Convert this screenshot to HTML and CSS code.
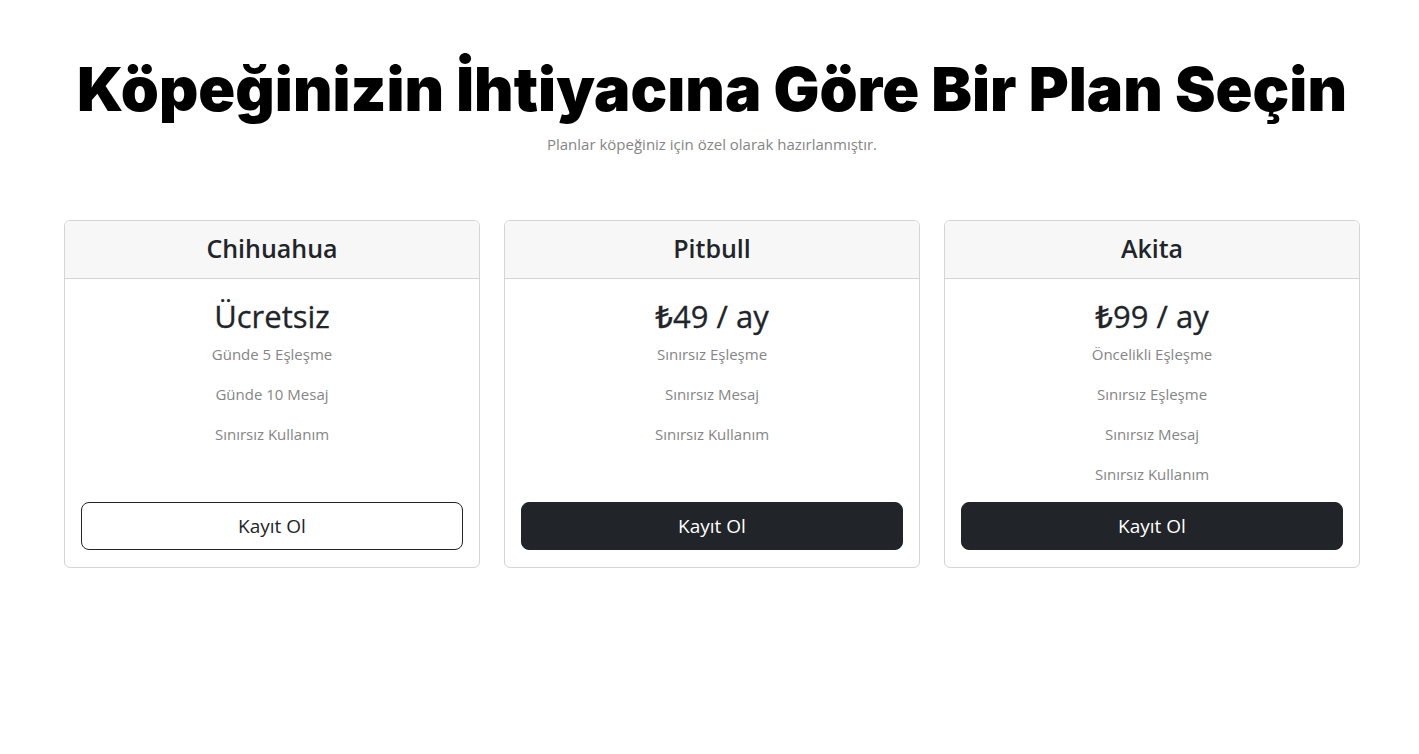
FILE: index.html
```html
<!DOCTYPE html>
<html lang="tr">
<head>
<meta charset="utf-8">
<title>Planlar</title>
<link rel="stylesheet" href="styles.css">
</head>
<body>
<main class="page">
  <header class="intro">
    <h1 class="title">Köpeğinizin İhtiyacına Göre Bir Plan Seçin</h1>
    <p class="lead">Planlar köpeğiniz için özel olarak hazırlanmıştır.</p>
  </header>
  <section class="plans">
    <article class="card">
      <div class="card-header"><h2 class="plan-name">Chihuahua</h2></div>
      <div class="card-body">
        <div class="price">Ücretsiz</div>
        <ul class="features">
          <li>Günde 5 Eşleşme</li>
          <li>Günde 10 Mesaj</li>
          <li>Sınırsız Kullanım</li>
        </ul>
        <button class="btn btn-outline" type="button">Kayıt Ol</button>
      </div>
    </article>
    <article class="card">
      <div class="card-header"><h2 class="plan-name">Pitbull</h2></div>
      <div class="card-body">
        <div class="price">₺49 / ay</div>
        <ul class="features">
          <li>Sınırsız Eşleşme</li>
          <li>Sınırsız Mesaj</li>
          <li>Sınırsız Kullanım</li>
        </ul>
        <button class="btn btn-dark" type="button">Kayıt Ol</button>
      </div>
    </article>
    <article class="card">
      <div class="card-header"><h2 class="plan-name">Akita</h2></div>
      <div class="card-body">
        <div class="price">₺99 / ay</div>
        <ul class="features">
          <li>Öncelikli Eşleşme</li>
          <li>Sınırsız Eşleşme</li>
          <li>Sınırsız Mesaj</li>
          <li>Sınırsız Kullanım</li>
        </ul>
        <button class="btn btn-dark" type="button">Kayıt Ol</button>
      </div>
    </article>
  </section>
</main>
</body>
</html>
```

FILE: styles.css
```css
* { box-sizing: border-box; }
html, body { margin: 0; padding: 0; background: #fff; }
body {
  font-family: "Open Sans", "Noto Sans", Arial, sans-serif;
  color: #212529;
}
.page {
  padding: 52px 0 0 5px;
}
.intro {
  text-align: center;
}
.title {
  margin: 0;
  font-family: Inter, "DejaVu Sans", sans-serif;
  font-weight: 900;
  font-size: 61px;
  line-height: 74px;
  color: #000;
}
.lead {
  margin: 7px 0 0;
  font-size: 15px;
  line-height: 22px;
  color: #858585;
}
.plans {
  display: flex;
  justify-content: center;
  gap: 24px;
  margin-top: 65px;
}
.card {
  width: 416px;
  border: 1px solid #d3d4d5;
  border-radius: 6px;
  display: flex;
  flex-direction: column;
  overflow: hidden;
}
.card-header {
  background: #f7f7f7;
  border-bottom: 1px solid #d3d4d5;
  height: 58px;
  padding-bottom: 2px;
  display: flex;
  align-items: center;
  justify-content: center;
}
.plan-name {
  margin: 0;
  font-size: 25px;
  font-weight: 600;
  line-height: 29px;
  color: #212529;
}
.card-body {
  flex: 1;
  padding: 18px 16px 17px;
  display: flex;
  flex-direction: column;
  align-items: stretch;
  text-align: center;
}
.price {
  font-size: 31px;
  line-height: 38px;
  font-weight: 500;
  margin-bottom: 7px;
  -webkit-text-stroke: 0.3px #212529;
}
.features {
  list-style: none;
  margin: 0;
  padding: 0;
  flex: 1;
  font-size: 15px;
  color: #858585;
}
.features li {
  line-height: 24px;
  margin-bottom: 16px;
}
.btn {
  height: 48px;
  border-radius: 8px;
  font-family: inherit;
  font-size: 19px;
  padding: 8px 16px;
  cursor: pointer;
}
.btn-outline {
  background: #fff;
  border: 1px solid #212529;
  color: #212529;
}
.btn-dark {
  background: #212529;
  border: 1px solid #212529;
  color: #fff;
}
```
